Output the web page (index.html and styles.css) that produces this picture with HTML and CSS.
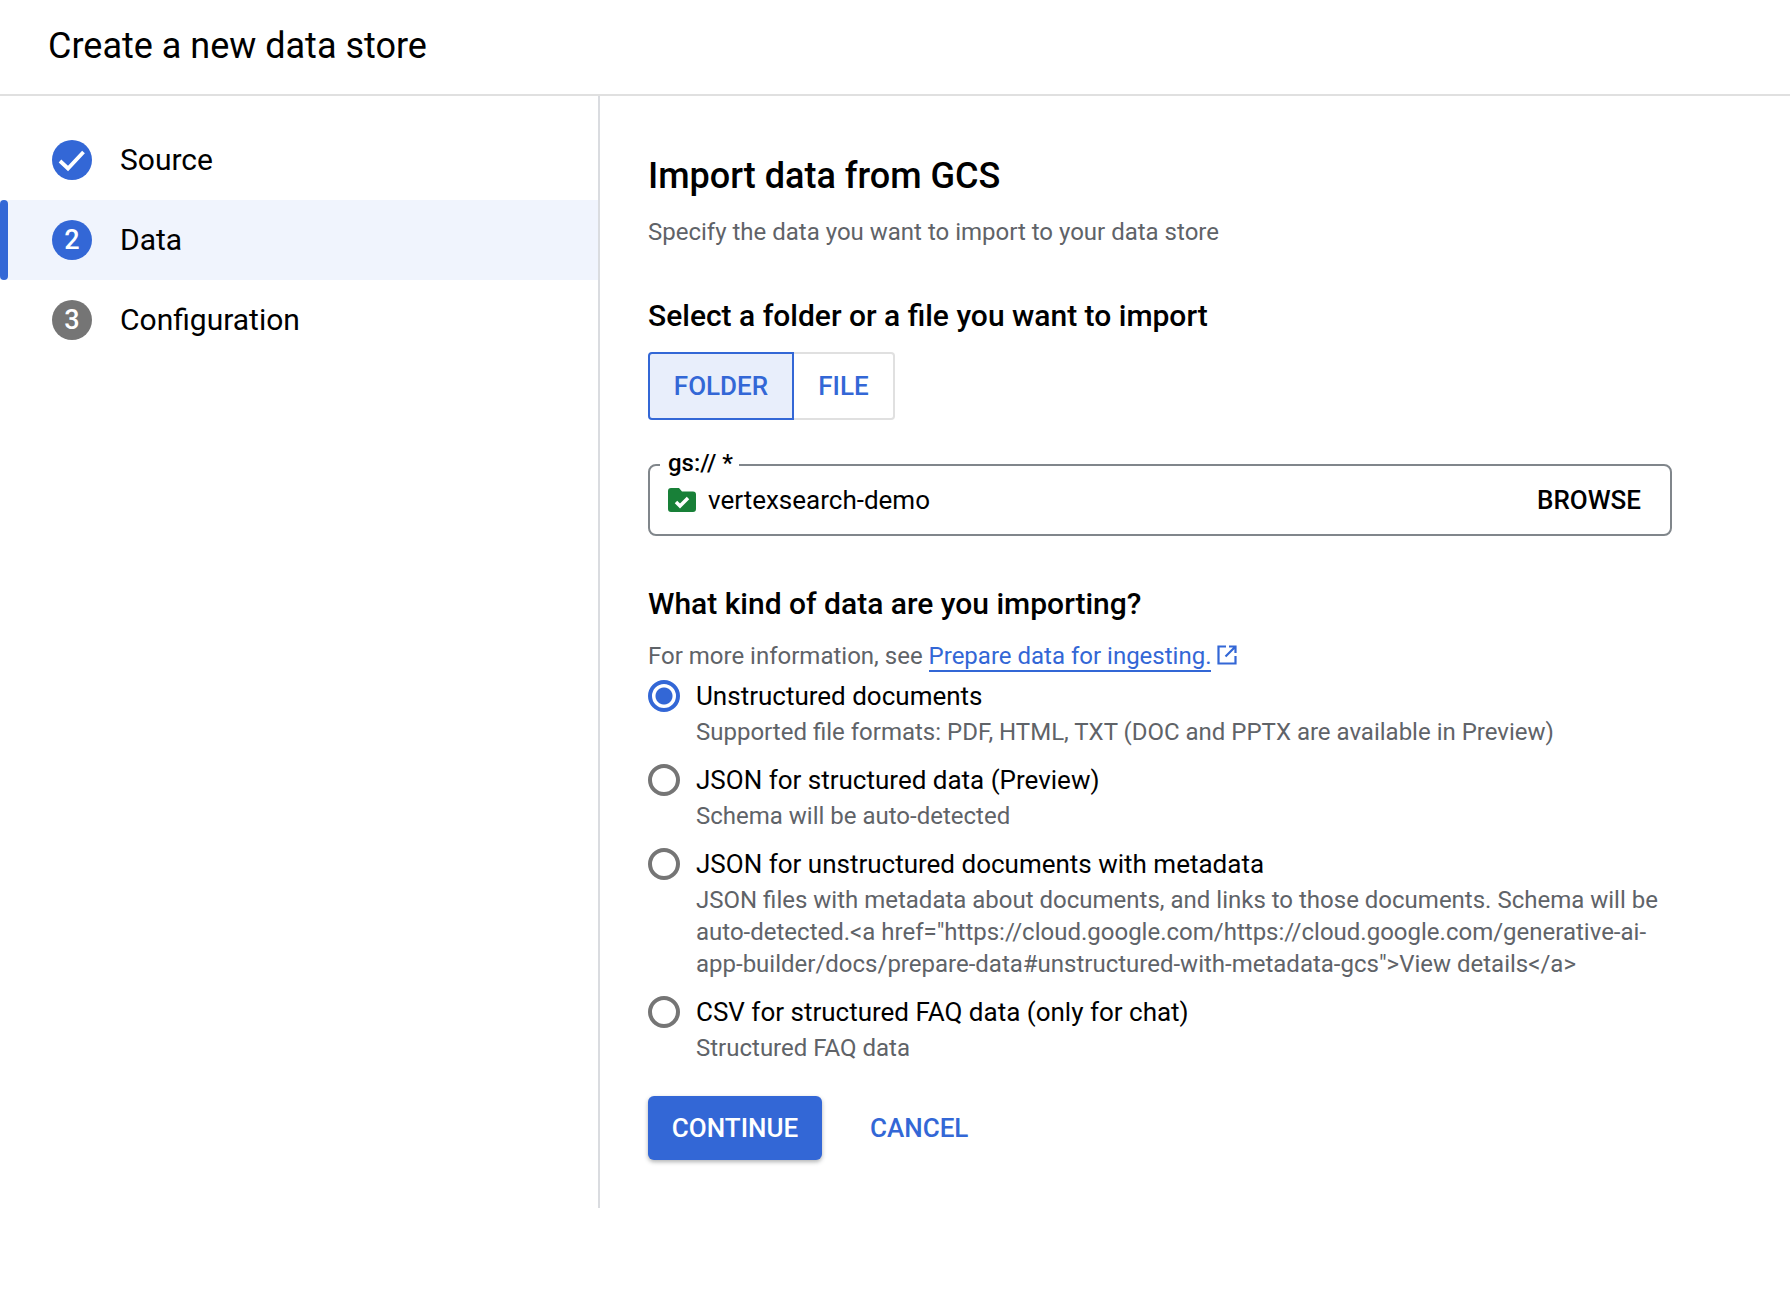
FILE: index.html
```html
<!DOCTYPE html>
<html lang="en">
<head>
<meta charset="utf-8">
<title>Create a new data store</title>
<link rel="stylesheet" href="styles.css">
</head>
<body>
<header class="top"><h1 class="top-title">Create a new data store</h1></header>
<div class="layout">
  <nav class="steps">
    <div class="step">
      <span class="badge"><svg class="badge-check" viewBox="0 0 40 40"><path d="M8 21l8 7.500L31.500 12" fill="none" stroke="#fff" stroke-width="3.800"/></svg></span>
      <span class="step-name">Source</span>
    </div>
    <div class="step step-active">
      <span class="badge">2</span>
      <span class="step-name">Data</span>
    </div>
    <div class="step">
      <span class="badge badge-todo">3</span>
      <span class="step-name">Configuration</span>
    </div>
  </nav>
  <main class="main">
    <h2 class="page-title">Import data from GCS</h2>
    <p class="page-sub">Specify the data you want to import to your data store</p>
    <h3 class="section">Select a folder or a file you want to import</h3>
    <div class="toggle">
      <button class="toggle-btn toggle-on">FOLDER</button>
      <button class="toggle-btn toggle-off">FILE</button>
    </div>
    <fieldset class="field">
      <legend class="field-label">gs:// *</legend>
      <div class="field-row">
        <svg class="folder" viewBox="0 0 28 24"><path d="M3 0h8l3 3.500h11a3 3 0 0 1 3 3V21a3 3 0 0 1-3 3H3a3 3 0 0 1-3-3V3a3 3 0 0 1 3-3z" fill="#188038"/><path d="M8 14l4 4 8-8" fill="none" stroke="#fff" stroke-width="3.500"/></svg>
        <span class="field-value">vertexsearch-demo</span>
        <span class="browse">BROWSE</span>
      </div>
    </fieldset>
    <h3 class="section section-kind">What kind of data are you importing?</h3>
    <p class="info">For more information, see <a class="link" href="#">Prepare data for ingesting.</a>
      <svg class="ext" viewBox="0 0 24 24"><path d="M11 3.500H3.500v17h17V13M14 3.500h6.500V10M20.500 3.500L10.500 13.500" fill="none" stroke="#3367d6" stroke-width="2.200"/></svg>
    </p>
    <div class="options">
      <div class="option">
        <span class="radio radio-on"></span>
        <div class="option-text">
          <div class="option-name">Unstructured documents</div>
          <div class="option-desc">Supported file formats: PDF, HTML, TXT (DOC and PPTX are available in Preview)</div>
        </div>
      </div>
      <div class="option">
        <span class="radio"></span>
        <div class="option-text">
          <div class="option-name">JSON for structured data (Preview)</div>
          <div class="option-desc">Schema will be auto-detected</div>
        </div>
      </div>
      <div class="option">
        <span class="radio"></span>
        <div class="option-text">
          <div class="option-name">JSON for unstructured documents with metadata</div>
          <div class="option-desc">JSON files with metadata about documents, and links to those documents. Schema will be auto-detected.&lt;a href="https://cloud.google.com/https://cloud.google.com/generative-ai-app-builder/docs/prepare-data#unstructured-with-metadata-gcs"&gt;View details&lt;/a&gt;</div>
        </div>
      </div>
      <div class="option">
        <span class="radio"></span>
        <div class="option-text">
          <div class="option-name">CSV for structured FAQ data (only for chat)</div>
          <div class="option-desc">Structured FAQ data</div>
        </div>
      </div>
    </div>
    <div class="actions">
      <button class="btn-primary">CONTINUE</button>
      <button class="btn-text">CANCEL</button>
    </div>
  </main>
</div>
</body>
</html>
```
FILE: styles.css
```css
* { box-sizing: border-box; }
html, body { margin: 0; padding: 0; background: #fff; }
body { font-family: Roboto, "Noto Sans", sans-serif; color: #000; height: 1292px; overflow: hidden; }
h1, h2, h3, p { margin: 0; font-weight: 400; }

.top { height: 96px; border-bottom: 2px solid #e0e0e0; padding: 0 48px; display: flex; align-items: center; }
.top-title { font-size: 36px; line-height: 48px; margin-top: -2px; }

.layout { display: flex; height: 1112px; }
.steps { width: 600px; flex: none; border-right: 2px solid #dadce0; padding-top: 24px; }
.step { height: 80px; display: flex; align-items: center; padding-left: 52px; position: relative; }
.step-active { background: #f0f4fd; }
.step-active::before { content: ""; position: absolute; left: 0; top: 0; bottom: 0; width: 8px; background: #3367d6; border-radius: 4px; }
.badge { width: 40px; height: 40px; border-radius: 50%; background: #3367d6; color: #fff; font-size: 27px; font-weight: 500; display: flex; align-items: center; justify-content: center; flex: none; }
.badge-todo { background: #757575; }
.badge-check { width: 40px; height: 40px; }
.step-name { margin-left: 28px; font-size: 30px; line-height: 40px; }

.main { flex: 1; padding: 56px 118px 0 48px; min-width: 0; }
.page-title { font-size: 36px; line-height: 48px; font-weight: 500; }
.page-sub { margin-top: 16px; font-size: 24px; line-height: 32px; color: #5f6368; }
.section { margin-top: 48px; font-size: 30px; line-height: 40px; font-weight: 500; }
.section-kind { margin-top: 48px; }

.toggle { display: flex; margin-top: 16px; height: 68px; }
.toggle-btn { font: 500 26px Roboto, sans-serif; color: #3367d6; background: #fff; padding: 0; }
.toggle-on { width: 146px; background: #e8eefb; border: 2px solid #3367d6; border-radius: 4px 0 0 4px; }
.toggle-off { width: 101px; border: 2px solid #e0e0e0; border-left: 0; border-radius: 0 4px 4px 0; }

.field { margin: 32px 0 0; padding: 0 29px 0 18px; height: 84px; border: 2px solid #80868b; border-radius: 8px; min-width: 0; }
.field-label { margin-left: -8px; padding: 0 6px 4px 8px; font-size: 24px; line-height: 22px; font-weight: 500; }
.field-row { display: flex; align-items: center; height: 44px; }
.folder { width: 28px; height: 24px; flex: none; }
.field-value { margin-left: 12px; font-size: 26px; flex: 1; }
.browse { font-size: 26px; font-weight: 500; }

.info { margin-top: 16px; font-size: 24px; line-height: 32px; color: #5f6368; }
.link { color: #3367d6; text-decoration: none; border-bottom: 2px solid #3367d6; }
.ext { width: 24px; height: 24px; vertical-align: -3px; margin-left: -2px; }

.options { margin-top: 4px; display: flex; flex-direction: column; gap: 12px; }
.option { display: flex; }
.radio { width: 32px; height: 32px; border-radius: 50%; border: 4px solid #757575; margin-top: 4px; flex: none; background: #fff; }
.radio-on { border-color: #3367d6; background: radial-gradient(circle, #3367d6 0 8px, #fff 9px); }
.option-text { margin-left: 16px; }
.option-name { font-size: 26px; line-height: 40px; }
.option-desc { font-size: 24px; line-height: 32px; color: #5f6368; }

.actions { margin-top: 32px; display: flex; align-items: center; gap: 48px; }
.btn-primary { width: 174px; height: 64px; border: 0; border-radius: 6px; background: #3367d6; color: #fff; font: 500 26px Roboto, sans-serif; box-shadow: 0 2px 4px rgba(60,64,67,.4); padding: 0; }
.btn-text { border: 0; background: none; color: #3367d6; font: 500 26px Roboto, sans-serif; padding: 0; }
```
